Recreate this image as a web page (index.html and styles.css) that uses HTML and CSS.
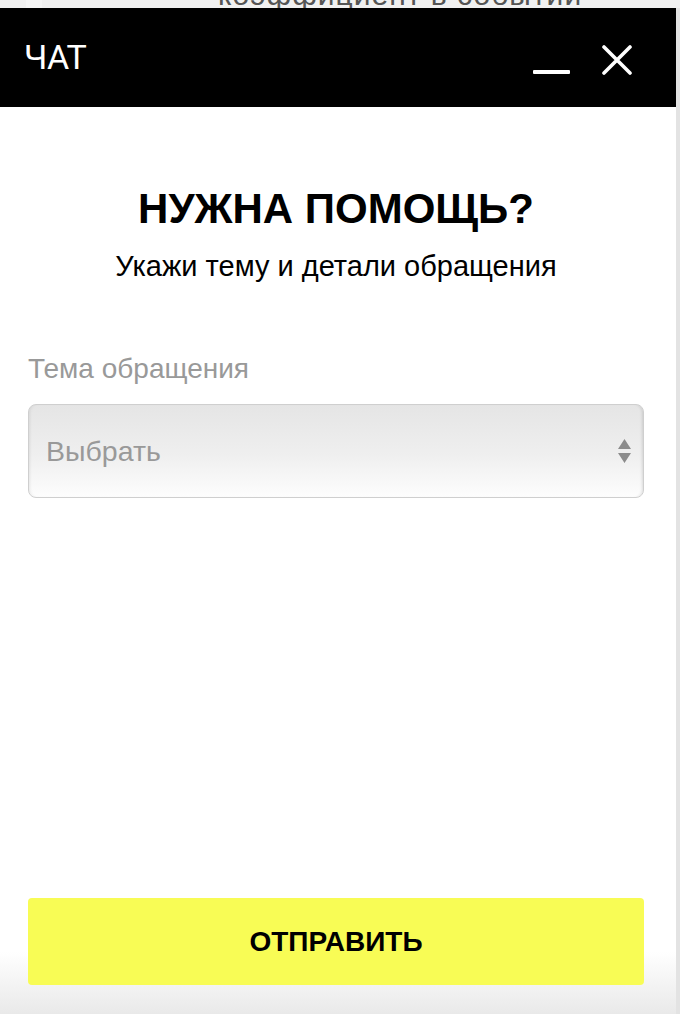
FILE: index.html
```html
<!DOCTYPE html>
<html lang="ru">
<head>
<meta charset="utf-8">
<link rel="stylesheet" href="styles.css">
</head>
<body>
<div class="backdrop">
  <div class="bd-block bd-a"></div>
  <div class="bd-block bd-b"></div>
  <div class="bd-text">коэффициент в событии</div>
</div>
<div class="chat">
  <header class="chat-head">
    <div class="chat-title">ЧАТ</div>
    <div class="chat-actions">
      <span class="btn-min"></span>
      <svg class="btn-close" width="30" height="30" viewBox="0 0 30 30"><path d="M2 2 L28 28 M28 2 L2 28" stroke="#fff" stroke-width="3.6" stroke-linecap="round"/></svg>
    </div>
  </header>
  <main class="chat-body">
    <h1 class="title">НУЖНА ПОМОЩЬ?</h1>
    <p class="subtitle">Укажи тему и детали обращения</p>
    <label class="field-label">Тема обращения</label>
    <div class="select">
      <span class="select-text">Выбрать</span>
      <span class="select-arrows">
        <svg width="13" height="24" viewBox="0 0 13 24"><path d="M6.5 0 L13 10 L0 10 Z M0 14 L13 14 L6.5 24 Z" fill="#8c8c8c"/></svg>
      </span>
    </div>
    <div class="spacer"></div>
    <div class="footer">
      <button class="submit">ОТПРАВИТЬ</button>
    </div>
  </main>
</div>
</body>
</html>
```

FILE: styles.css
```css
html, body {
  margin: 0;
  padding: 0;
}
body {
  width: 680px;
  height: 1014px;
  overflow: hidden;
  background: #e3e3e3;
  font-family: "Liberation Sans", Arial, sans-serif;
}
.backdrop {
  height: 8px;
  overflow: hidden;
  background: #f1f1f1;
  display: flex;
}
.bd-block {
  height: 8px;
}
.bd-a {
  width: 26px;
  background: #f1f1f1;
}
.bd-b {
  width: 16px;
  background: #f6f6f6;
}
.bd-text {
  margin-left: 176px;
  margin-top: -22px;
  font-size: 30px;
  color: #555;
  letter-spacing: 1px;
  white-space: nowrap;
}
.chat {
  width: 676px;
  height: 1006px;
  display: flex;
  flex-direction: column;
  background: #fff;
}
.chat-head {
  height: 99px;
  background: #000;
  display: flex;
  align-items: center;
  justify-content: space-between;
  padding: 0 44px 0 24px;
  flex-shrink: 0;
}
.chat-title {
  color: #fff;
  font-family: Roboto, "DejaVu Sans", sans-serif;
  font-size: 34px;
  letter-spacing: -0.5px;
  margin-top: -1px;
}
.chat-actions {
  display: flex;
  align-items: center;
  gap: 32px;
  margin-top: 4px;
}
.btn-min {
  width: 37px;
  height: 4px;
  background: #fff;
  border-radius: 1px;
  margin-top: 24px;
}
.btn-close {
  display: block;
}
.chat-body {
  flex: 1;
  display: flex;
  flex-direction: column;
  padding: 0 32px 0 28px;
  background: linear-gradient(to bottom, #fff 0, #fff 845px, #e9e9e9 100%);
}
.title {
  margin: 76px 0 0;
  text-align: center;
  font-size: 42px;
  font-weight: 700;
  color: #000;
  line-height: 52px;
}
.subtitle {
  margin: 14px 0 0;
  text-align: center;
  font-size: 29px;
  color: #000;
  line-height: 34px;
}
.field-label {
  margin-top: 69px;
  font-size: 28px;
  color: #999;
  line-height: 34px;
}
.select {
  margin-top: 18px;
  height: 92px;
  border: 1px solid #cfcfcf;
  border-radius: 8px;
  background: linear-gradient(to bottom, #e5e5e5 0%, #efefef 55%, #fdfdfd 100%);
  box-shadow: inset -3px 0 3px -2px rgba(0,0,0,0.12), inset 3px 0 3px -2px rgba(0,0,0,0.08);
  display: flex;
  align-items: center;
  justify-content: space-between;
  padding: 0 12px 0 17px;
}
.select-text {
  font-size: 28.5px;
  color: #999;
}
.select-arrows {
  display: flex;
}
.spacer {
  flex: 1;
}
.footer {
  padding-bottom: 29px;
}
.submit {
  width: 100%;
  height: 87px;
  border: none;
  border-radius: 4px;
  background: #f8fc55;
  font-family: "Liberation Sans", Arial, sans-serif;
  font-weight: 700;
  font-size: 28px;
  color: #000;
  display: block;
}
```
